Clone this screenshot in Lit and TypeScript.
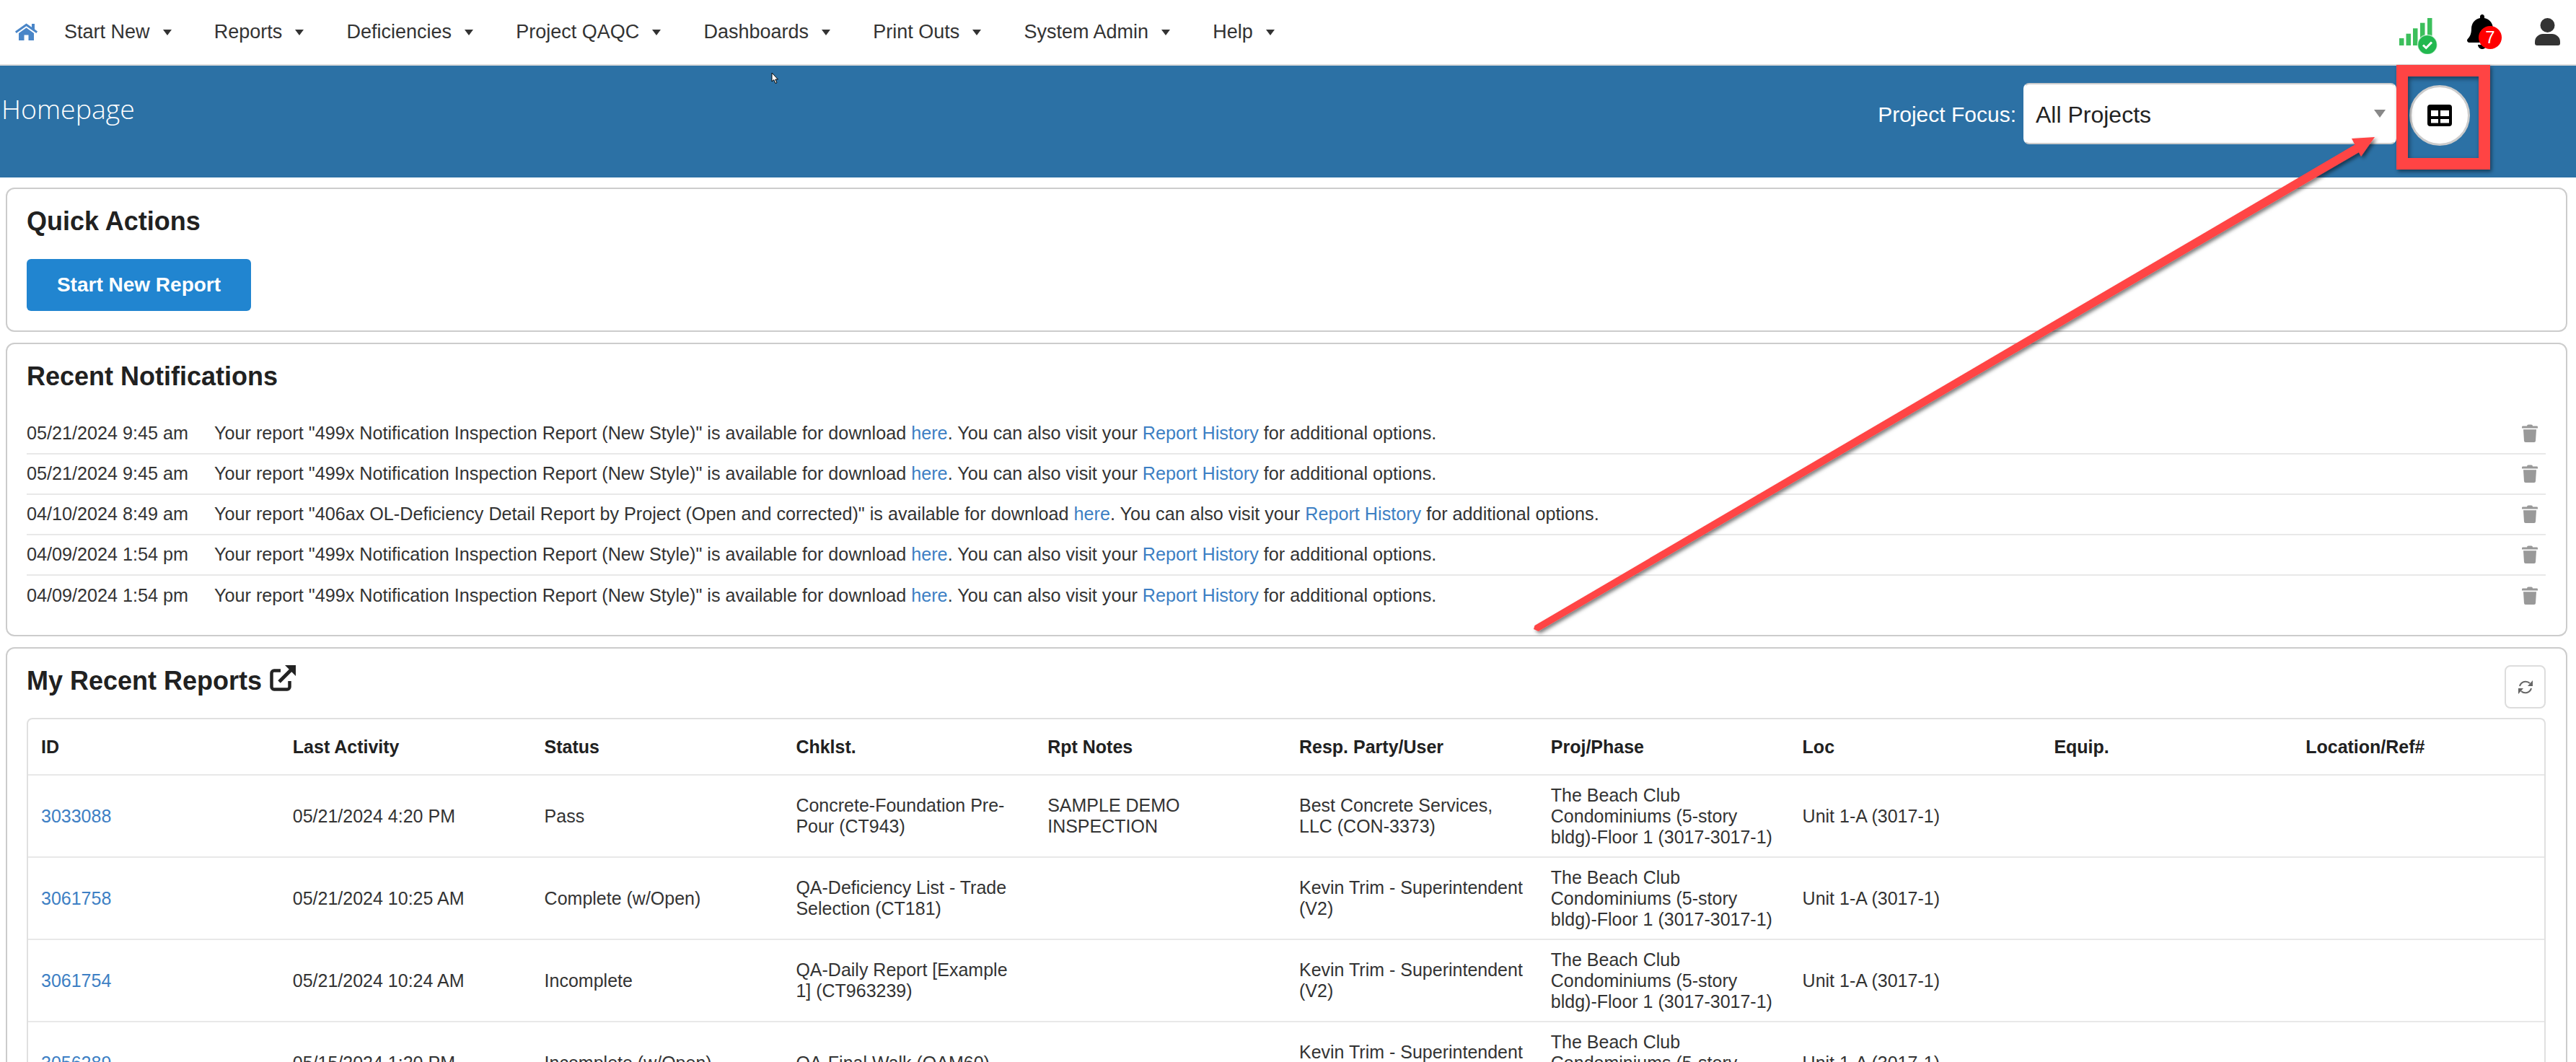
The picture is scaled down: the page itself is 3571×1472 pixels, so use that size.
import { LitElement, html, css, svg } from "lit";
import { customElement } from "lit/decorators.js";

const NAV = ["Start New", "Reports", "Deficiencies", "Project QAQC", "Dashboards", "Print Outs", "System Admin", "Help"];

const NOTES = [
  ["05/21/2024 9:45 am", "499x Notification Inspection Report (New Style)"],
  ["05/21/2024 9:45 am", "499x Notification Inspection Report (New Style)"],
  ["04/10/2024 8:49 am", "406ax OL-Deficiency Detail Report by Project (Open and corrected)"],
  ["04/09/2024 1:54 pm", "499x Notification Inspection Report (New Style)"],
  ["04/09/2024 1:54 pm", "499x Notification Inspection Report (New Style)"],
];

const HEAD = ["ID", "Last Activity", "Status", "Chklst.", "Rpt Notes", "Resp. Party/User", "Proj/Phase", "Loc", "Equip.", "Location/Ref#"];
const PROJ = "The Beach Club Condominiums (5-story bldg)-Floor 1 (3017-3017-1)";
const KEVIN = "Kevin Trim - Superintendent (V2)";
const ROWS = [
  ["3033088", "05/21/2024 4:20 PM", "Pass", "Concrete-Foundation Pre-Pour (CT943)", "SAMPLE DEMO INSPECTION", "Best Concrete Services, LLC (CON-3373)", PROJ, "Unit 1-A (3017-1)", "", ""],
  ["3061758", "05/21/2024 10:25 AM", "Complete (w/Open)", "QA-Deficiency List - Trade Selection (CT181)", "", KEVIN, PROJ, "Unit 1-A (3017-1)", "", ""],
  ["3061754", "05/21/2024 10:24 AM", "Incomplete", "QA-Daily Report [Example 1] (CT963239)", "", KEVIN, PROJ, "Unit 1-A (3017-1)", "", ""],
  ["3056289", "05/15/2024 1:20 PM", "Incomplete (w/Open)", "QA-Final Walk (QAM60)", "", KEVIN, PROJ, "Unit 1-A (3017-1)", "", ""],
];

const trash = html`<svg class="trash" viewBox="0 0 22 25" width="22" height="25">
  <path d="M7 2.4 Q7 0.4 9 0.4 H13 Q15 0.4 15 2.4 H20.5 Q22 2.4 22 3.8 V5.6 H0 V3.8 Q0 2.4 1.5 2.4Z"/>
  <path d="M2 7.2 H20 L19 23 Q18.9 25 17 25 H5 Q3.1 25 3 23Z"/>
</svg>`;

@customElement("app-root")
export class AppRoot extends LitElement {
  static styles = css`
    :host {
      display: block;
      position: relative;
      width: 3571px;
      height: 1472px;
      overflow: hidden;
      background: #fff;
      color: #333;
      font-family: "Liberation Sans", Arial, sans-serif;
      font-size: 25px;
    }
    a { color: #3d7fc4; text-decoration: none; }
    svg { display: block; flex: none; }

    nav {
      display: flex;
      align-items: center;
      height: 89px;
      padding-left: 21px;
      border-bottom: 2px solid #dcdcdc;
      font-size: 27px;
    }
    .home { margin-right: 37px; margin-top: -1px; }
    .item { display: flex; align-items: center; gap: 18px; margin-right: 59.2px; }
    .caret {
      width: 0; height: 0;
      border-left: 6px solid transparent;
      border-right: 6px solid transparent;
      border-top: 8px solid #333;
    }
    .status {
      margin-left: auto;
      align-self: flex-start;
      display: flex;
      align-items: flex-start;
      padding-right: 22px;
    }
    .signal { margin-top: 25px; margin-right: 41px; }
    .bell { position: relative; margin-top: 20px; margin-right: 52px; width: 42px; height: 48px; }
    .badge {
      position: absolute;
      left: 16px; top: 16px;
      width: 32px; height: 32px;
      border-radius: 50%;
      background: #f00;
      color: #fff;
      font-size: 24px;
      line-height: 32px;
      text-align: center;
    }
    .user { margin-top: 25px; }

    .banner {
      display: flex;
      align-items: flex-start;
      justify-content: space-between;
      height: 155px;
      padding: 0 147px 0 2px;
      background: #2c71a5;
      color: #fff;
    }
    .title {
      margin-top: 35px;
      font-family: "Open Sans", sans-serif;
      font-weight: 300;
      font-size: 37.5px;
      line-height: 50px;
    }
    .focus { display: flex; align-items: flex-start; margin-top: 24px; }
    .focus label { font-size: 30px; line-height: 85px; margin-right: 10px; margin-top: 1px; }
    .select {
      display: flex;
      align-items: center;
      justify-content: space-between;
      box-sizing: border-box;
      width: 517px;
      height: 85px;
      padding: 4px 13px 0 15px;
      background: #fff;
      border: 2px solid #ccc;
      border-left-color: #fff;
      border-right-color: #fff;
      border-radius: 8px;
      color: #222;
      font-size: 32px;
    }
    .select i {
      width: 0; height: 0;
      margin-top: -4px;
      border-left: 8px solid transparent;
      border-right: 8px solid transparent;
      border-top: 11px solid #888;
    }
    .circle {
      display: flex;
      align-items: center;
      justify-content: center;
      box-sizing: border-box;
      width: 84px;
      height: 84px;
      margin: 3px 0 0 18px;
      background: #fff;
      border: 3px solid #ccc;
      border-radius: 50%;
    }

    main {
      display: flex;
      flex-direction: column;
      gap: 15px;
      padding: 14px 12px 0 8px;
    }
    .card {
      box-sizing: border-box;
      padding: 25px 28px 26px 27px;
      background: #fff;
      border: 2px solid #ccc;
      border-radius: 12px;
    }
    h2 {
      margin: 0;
      color: #212121;
      font-size: 36px;
      font-weight: 700;
      line-height: 40px;
    }
    .quick { height: 200px; }
    .start {
      display: flex;
      align-items: center;
      justify-content: center;
      width: 311px;
      height: 72px;
      margin-top: 32px;
      background: #2185d0;
      border-radius: 6px;
      color: #fff;
      font-size: 28px;
      font-weight: 700;
    }

    .notes { margin-top: 32px; font-size: 25.2px; }
    .note {
      box-sizing: border-box;
      display: flex;
      align-items: center;
      justify-content: space-between;
      height: 56px;
      padding-right: 11px;
      padding-bottom: 2px;
      border-bottom: 2px solid #e8e8e8;
    }
    .note:last-child { border-bottom: 0; }
    .when { display: inline-block; width: 260px; }
    .trash { fill: #999; }

    .reports { height: 700px; padding-top: 23px; }
    .rhead { display: flex; justify-content: space-between; align-items: flex-start; }
    .rtitle { display: flex; align-items: flex-start; gap: 11px; margin-top: 2px; }
    .ext { margin-top: -2px; }
    .refresh {
      display: flex;
      align-items: center;
      justify-content: center;
      box-sizing: border-box;
      width: 57px;
      height: 60px;
      border: 2px solid #ddd;
      border-radius: 8px;
    }
    .table {
      margin-top: 13px;
      border: 2px solid #e0e0e0;
      border-bottom: 0;
      border-radius: 8px 8px 0 0;
    }
    .tr {
      box-sizing: border-box;
      display: grid;
      grid-template-columns: repeat(10, 1fr);
      align-items: center;
      height: 114px;
      border-bottom: 2px solid #e8e8e8;
    }
    .tr.th { height: 78px; font-weight: 700; color: #212121; }
    .tr > div { padding: 0 18px; line-height: 29px; }

    .overlay { position: absolute; left: 0; top: 0; pointer-events: none; }
    .redbox {
      position: absolute;
      left: 3322px; top: 90px;
      box-sizing: border-box;
      width: 130px; height: 145px;
      border: 16px solid #ff4444;
      box-shadow: 2px 3px 5px rgba(0, 0, 0, .45), inset 2px 3px 6px rgba(0, 0, 0, .45);
    }
    .cursor { position: absolute; left: 1069px; top: 100px; }
  `;

  render() {
    return html`
      <nav>
        <svg class="home" viewBox="0 0 31 24" width="31" height="24" fill="#4a86c8">
          <path d="M0 11.5 L15.5 0.5 L23 5.8 V1 H27 V8.6 L31 11.5 L29.4 14 L15.5 4.2 L1.6 14Z"/>
          <path d="M15.5 6.6 L26 14 V24 H18.5 V16.5 H12.5 V24 H5 V14Z"/>
        </svg>
        ${NAV.map((n) => html`<div class="item"><span>${n}</span><span class="caret"></span></div>`)}
        <div class="status">
          <svg class="signal" viewBox="0 0 53 50" width="53" height="50">
            <g fill="#3cbf5c">
              <rect x="0" y="28" width="6.5" height="10"/>
              <rect x="9.5" y="21.7" width="6.5" height="16.3"/>
              <rect x="19" y="14.3" width="6.5" height="23.7"/>
              <rect x="29" y="6.7" width="6.5" height="31.3"/>
              <rect x="39" y="0" width="6.5" height="38"/>
            </g>
            <circle cx="39" cy="37" r="13.5" fill="#22b84f" stroke="#fff" stroke-opacity=".6" stroke-width="1.5"/>
            <path d="M33 37.5 L37.2 41.5 L45 33.5" fill="none" stroke="#fff" stroke-width="3"/>
          </svg>
          <div class="bell">
            <svg viewBox="0 0 448 512" width="42" height="48" fill="#000">
              <path d="M224 512c35.32 0 63.97-28.65 63.97-64H160.03c0 35.35 28.65 64 63.97 64zm215.39-149.71c-19.32-20.76-55.47-51.99-55.47-154.29 0-77.7-54.48-139.9-127.94-155.16V32c0-17.67-14.32-32-31.98-32s-31.98 14.33-31.98 32v20.84C118.56 68.1 64.08 130.3 64.08 208c0 102.3-36.15 133.53-55.47 154.29-6 6.45-8.66 14.16-8.61 21.71.11 16.4 12.98 32 32.1 32h383.8c19.12 0 32-15.6 32.1-32 .05-7.55-2.61-15.27-8.61-21.71z"/>
            </svg>
            <span class="badge">7</span>
          </div>
          <svg class="user" viewBox="0 0 35 38" width="35" height="38" fill="#333">
            <circle cx="17.5" cy="10" r="10"/>
            <path d="M0 33 C0 26 6 22 11 22 H24 C29 22 35 26 35 33 V35 Q35 38 32 38 H3 Q0 38 0 35Z"/>
          </svg>
        </div>
      </nav>

      <div class="banner">
        <div class="title">Homepage</div>
        <div class="focus">
          <label>Project Focus:</label>
          <div class="select"><span>All Projects</span><i></i></div>
          <div class="circle">
            <svg viewBox="0 0 34 30" width="34" height="30">
              <rect width="34" height="30" rx="4" fill="#000"/>
              <g fill="#fff">
                <rect x="5" y="8" width="10" height="8"/>
                <rect x="18" y="8" width="12" height="8"/>
                <rect x="5" y="20" width="10" height="5.5"/>
                <rect x="18" y="20" width="12" height="5.5"/>
              </g>
            </svg>
          </div>
        </div>
      </div>

      <main>
        <section class="card quick">
          <h2>Quick Actions</h2>
          <div class="start">Start New Report</div>
        </section>

        <section class="card">
          <h2>Recent Notifications</h2>
          <div class="notes">
            ${NOTES.map(
              ([d, r]) => html`<div class="note">
                <div><span class="when">${d}</span>Your report "${r}" is available for download <a>here</a>. You can also visit your <a>Report History</a> for additional options.</div>
                ${trash}
              </div>`
            )}
          </div>
        </section>

        <section class="card reports">
          <div class="rhead">
            <div class="rtitle">
              <h2>My Recent Reports</h2>
              <svg class="ext" viewBox="0 0 36 36" width="36" height="36">
                <path d="M15 7.5 H6 a3.5 3.5 0 0 0 -3.5 3.5 V30 a3.5 3.5 0 0 0 3.5 3.5 H24 a3.5 3.5 0 0 0 3.5 -3.5 V22" fill="none" stroke="#222" stroke-width="4.5"/>
                <path d="M13 23 L30 6" fill="none" stroke="#222" stroke-width="5"/>
                <path d="M21 0 H36 V15Z" fill="#222"/>
              </svg>
            </div>
            <div class="refresh">
              <svg viewBox="0 0 22 21" width="22" height="21" fill="#666">
                <path d="M3 9 A8.5 8.5 0 0 1 17 5" fill="none" stroke="#666" stroke-width="2"/>
                <path d="M21 1 V9 H14Z"/>
                <path d="M19 12 A8.5 8.5 0 0 1 5 16" fill="none" stroke="#666" stroke-width="2"/>
                <path d="M1 20 V12 H8Z"/>
              </svg>
            </div>
          </div>
          <div class="table">
            <div class="tr th">${HEAD.map((h) => html`<div>${h}</div>`)}</div>
            ${ROWS.map(
              (r) => html`<div class="tr">
                ${r.map((c, i) => html`<div>${i === 0 ? html`<a>${c}</a>` : c}</div>`)}
              </div>`
            )}
          </div>
        </section>
      </main>

      <div class="redbox"></div>
      <svg class="cursor" viewBox="0 0 11 17" width="11" height="17">
        <path d="M1 1 V13 L3.8 10.6 L6 15.5 L8 14.6 L5.8 10 H9.5Z" fill="#fff" stroke="#000" stroke-width="1"/>
      </svg>
      <svg class="overlay" width="3571" height="1472" viewBox="0 0 3571 1472">
        <defs>
          <filter id="ds" x="-5%" y="-5%" width="110%" height="110%">
            <feDropShadow dx="3" dy="3" stdDeviation="2.5" flood-color="#000" flood-opacity=".5"/>
          </filter>
        </defs>
        <g filter="url(#ds)" fill="#ff4444">
          ${svg`<polygon points="3275,208.2 3269,197.8 2127.5,867 2126,872 2132.5,875"/>
          <polygon points="3292,190 3260,192 3273,217"/>`}
        </g>
      </svg>
    `;
  }
}
